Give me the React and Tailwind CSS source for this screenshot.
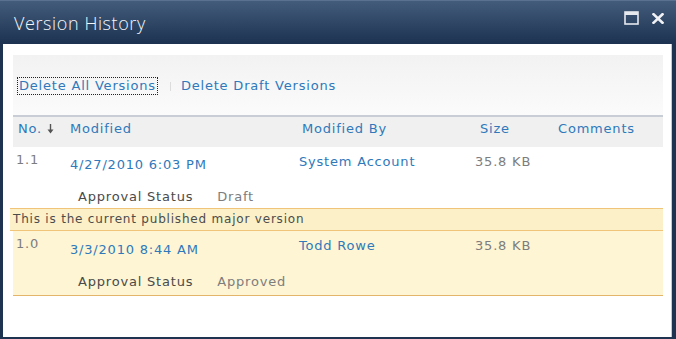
import React from "react";

const body = { fontFamily: '"DejaVu Sans", Verdana, sans-serif' };

function Row({ no, date, by, size, status, tops, h, extra }) {
  return (
    <div className={`grid grid-cols-[57px_229px_177px_80px_1fr] relative ${extra}`} style={{ height: h }}>
      <div className="pl-[3px] text-[#7d7d7d]" style={{ paddingTop: tops[0] }}>{no}</div>
      <div className="pl-0 text-[#2f79bb]" style={{ paddingTop: tops[1] }}>{date}</div>
      <div className="text-[#2f79bb]" style={{ paddingTop: tops[2] }}>{by}</div>
      <div className="-ml-[1px] text-[#7d7d7d]" style={{ paddingTop: tops[2] }}>{size}</div>
      <div />
      <div className="absolute left-[65px] flex gap-[24px]" style={{ top: tops[3] }}>
        <span className="text-[#4a4a4a]">Approval Status</span>
        <span className="text-[#7d7d7d]">{status}</span>
      </div>
    </div>
  );
}

export default function App() {
  return (
    <div className="w-[676px] h-[339px] flex flex-col bg-[#1d3350] overflow-hidden">
      <div className="h-[44px] shrink-0 flex items-start justify-between bg-gradient-to-b from-[#445c7c] to-[#1c3250] border-t border-[#5a7190]">
        <div
          className="pl-[14px] pt-[10px] text-[18px] leading-[24px] text-[#f4f6f9] font-light tracking-[0.6px]"
          style={{ fontFamily: '"Open Sans", "Segoe UI", sans-serif' }}
        >
          Version History
        </div>
        <div className="flex items-start pt-[10px] pr-[12px] gap-[13px]">
          <svg width="15" height="14" viewBox="0 0 15 14">
            <rect x="1" y="1" width="13" height="12" fill="none" stroke="#e6e9ee" strokeWidth="1.6" />
            <rect x="1" y="1" width="13" height="3" fill="#e6e9ee" />
          </svg>
          <svg width="12" height="11" viewBox="0 0 12 11" className="mt-[2px]">
            <path d="M1.5 1.2 L10.5 9.8 M10.5 1.2 L1.5 9.8" stroke="#f0f2f5" strokeWidth="2.6" strokeLinecap="square" />
          </svg>
        </div>
      </div>
      <div
        className="flex-1 ml-[3px] mr-[4px] mb-[2px] bg-white border-r border-[#b9cde0] pl-[10px] pr-[8px] text-[13px] leading-[16px] tracking-[0.8px]"
        style={body}
      >
        <div className="mt-[11px] h-[62px] bg-gradient-to-b from-[#f2f2f2] to-[#fbfbfb] border-b-2 border-[#c9ced6] pt-[23px] pl-[5px] flex items-start">
          <span className="outline-1 outline-dotted outline-[#222] px-[1px] text-[#2f79bb]">Delete All Versions</span>
          <span className="w-px h-[9px] bg-[#dcdcdc] mt-[4px] ml-[13px] mr-[10px]" />
          <span className="text-[#2f79bb]">Delete Draft Versions</span>
        </div>
        <div className="h-[30px] bg-[#f0f0f0] grid grid-cols-[57px_229px_177px_80px_1fr] pt-[4px] text-[#2f79bb]">
          <div className="pl-[5px] flex items-start">
            <span>No.</span>
            <svg width="7" height="10" viewBox="0 0 7 10" className="ml-[5px] mt-[3px]">
              <path d="M3.5 0 V8" stroke="#555" strokeWidth="1.4" />
              <path d="M0.5 5.5 L3.5 9.5 L6.5 5.5 Z" fill="#555" />
            </svg>
          </div>
          <div>Modified</div>
          <div className="pl-[3px]">Modified By</div>
          <div className="pl-[4px]">Size</div>
          <div className="pl-[2px]">Comments</div>
        </div>
        <Row
          no="1.1"
          date="4/27/2010 6:03 PM"
          by="System Account"
          size="35.8 KB"
          status="Draft"
          tops={[5, 10, 7, 42]}
          h={61}
          extra=""
        />
        <div
          className="h-[23px] -ml-[3px] bg-[#fbf0c8] border-y border-[#f0c57a] pl-[3px] pt-[3px] text-[12px] leading-[15px] text-[#4c4c4c]"
        >
          This is the current published major version
        </div>
        <Row
          no="1.0"
          date="3/3/2010 8:44 AM"
          by="Todd Rowe"
          size="35.8 KB"
          status="Approved"
          tops={[5, 11, 7, 43]}
          h={65}
          extra="bg-[#fdf5d4] border-b border-[#e2b56a]"
        />
      </div>
    </div>
  );
}
